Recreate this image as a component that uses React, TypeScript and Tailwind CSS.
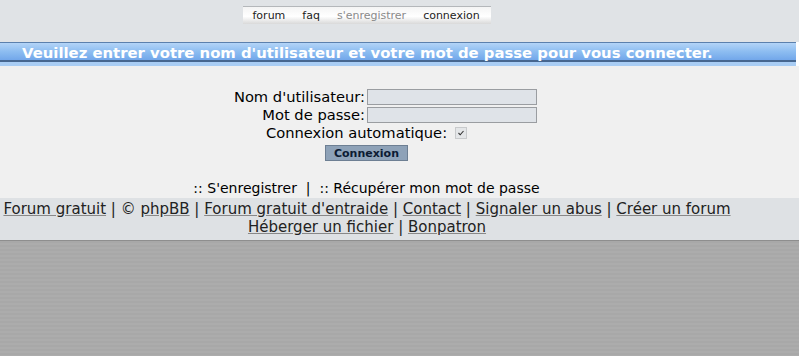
export default function App() {
  const navItems = [
    { label: 'forum', muted: false },
    { label: 'faq', muted: false },
    { label: "s'enregistrer", muted: true },
    { label: 'connexion', muted: false },
  ]

  const footerRows = [
    ['Forum gratuit', '© phpBB', "Forum gratuit d'entraide", 'Contact', 'Signaler un abus', 'Créer un forum'],
    ['Héberger un fichier', 'Bonpatron'],
  ]

  return (
    <div className="w-[799px] h-[356px] flex flex-col overflow-hidden font-['DejaVu_Sans',Verdana,sans-serif] text-black">
      {/* top nav */}
      <div className="h-[42px] bg-[#e0e3e6] pt-[6px]">
        <div className="w-[733px] flex justify-center">
          <div className="w-[248px] h-[18px] flex items-center gap-[17px] pl-[10px] border-t border-[#b4b7ba] bg-[linear-gradient(to_bottom,#f4f4f4,#ffffff_55%,#d9d9d9)] text-[11px] leading-none">
            {navItems.map((item) => (
              <span key={item.label} className={item.muted ? 'text-[#8a8a8a]' : 'text-[#222]'}>
                {item.label}
              </span>
            ))}
          </div>
        </div>
      </div>

      {/* title bar */}
      <div className="h-[24px] w-[796px] flex flex-col">
        <div className="h-[20px] flex items-center pl-[22px] border-t border-[#5b80ad] border-b-2 border-b-[#46668f] bg-[linear-gradient(to_bottom,#b3d4f7,#8dbdf1_50%,#72a7ea)]">
          <span className="text-white font-bold text-[14.85px] leading-none pt-[3px]">
            Veuillez entrer votre nom d'utilisateur et votre mot de passe pour vous connecter.
          </span>
        </div>
        <div className="flex-1 bg-[#a9cdf4]" />
      </div>

      {/* login form */}
      <div className="h-[132px] bg-[#f0f0f0] pt-[22px] text-[14.7px] leading-[18px]">
        <div className="w-[733px] flex flex-col">
          <div className="grid grid-cols-[365px_auto] items-center">
            <span className="text-right">Nom d'utilisateur:</span>
            <span className="ml-[2px] w-[170px] h-[16px] bg-[#dfe3e8] border border-[#9a9da1]" />
            <span className="text-right">Mot de passe:</span>
            <span className="ml-[2px] w-[170px] h-[16px] bg-[#dfe3e8] border border-[#9a9da1]" />
          </div>
          <div className="flex justify-center items-center gap-[8px]">
            <span>Connexion automatique:</span>
            <span className="w-[12px] h-[12px] bg-[#e4e6e8] border border-[#c8cacc] flex items-center justify-center">
              <svg width="8" height="8" viewBox="0 0 8 8">
                <path d="M1.5 4 L3.2 5.8 L6.5 2" fill="none" stroke="#333" strokeWidth="1.1" />
              </svg>
            </span>
          </div>
          <div className="flex justify-center mt-[3px]">
            <button className="w-[83px] h-[16px] bg-[#8ea2b8] border border-[#6d7f93] text-[11px] font-bold text-[#0c1b33] leading-none">
              Connexion
            </button>
          </div>
          <div className="text-center mt-[18px] text-[14px] whitespace-pre">
            {":: S'enregistrer  |  :: Récupérer mon mot de passe"}
          </div>
        </div>
      </div>

      {/* footer */}
      <div className="h-[42px] bg-[#dee1e4] pt-[2px] text-[15px] leading-[18px] text-[#222]">
        <div className="w-[734px] flex flex-col items-center">
          {footerRows.map((row, r) => (
            <div key={r} className="whitespace-nowrap">
              {row.map((link, i) => (
                <span key={link}>
                  {i > 0 && <span> | </span>}
                  {link === '© phpBB' ? (
                    <>
                      © <a className="underline decoration-[#888]">phpBB</a>
                    </>
                  ) : (
                    <a className="underline decoration-[#888]">{link}</a>
                  )}
                </span>
              ))}
            </div>
          ))}
        </div>
      </div>

      {/* bottom filler */}
      <div className="flex-1 border-t border-[#8e8e8e] bg-[repeating-linear-gradient(to_bottom,#a8a8a8_0px,#a8a8a8_2px,#acacac_2px,#acacac_4px)]" />
    </div>
  )
}
